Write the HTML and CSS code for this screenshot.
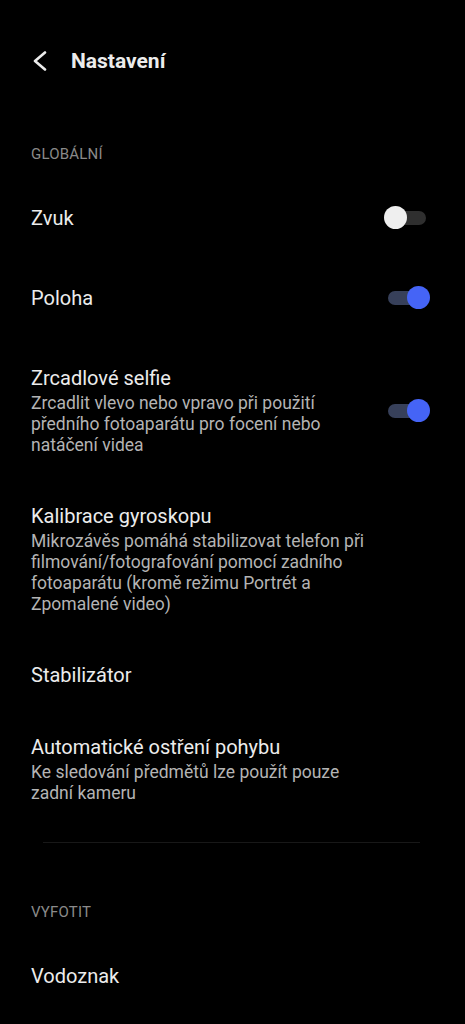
FILE: index.html
```html
<!DOCTYPE html>
<html lang="cs">

<head>
  <meta charset="UTF-8">
  <meta name="viewport" content="width=device-width, initial-scale=1.0">
  <title>Nastavení</title>
  <link rel="stylesheet" href="styles.css">
</head>

<body>
  <header class="top-bar">
    <svg class="back-icon" width="14" height="20" viewBox="0 0 14 20">
      <polyline points="12,1.5 2,10 12,18.5" fill="none" stroke="#ececec" stroke-width="2.6" stroke-linecap="round" stroke-linejoin="round" />
    </svg>
    <h1 class="page-title">Nastavení</h1>
  </header>

  <section class="settings-group">
    <div class="group-label">GLOBÁLNÍ</div>

    <div class="setting-row tall">
      <div class="setting-text">
        <div class="setting-title">Zvuk</div>
      </div>
      <div class="switch"><span class="switch-track"></span><span class="switch-knob"></span></div>
    </div>

    <div class="setting-row tall">
      <div class="setting-text">
        <div class="setting-title">Poloha</div>
      </div>
      <div class="switch on"><span class="switch-track"></span><span class="switch-knob"></span></div>
    </div>

    <div class="setting-row">
      <div class="setting-text">
        <div class="setting-title">Zrcadlové selfie</div>
        <div class="setting-desc">Zrcadlit vlevo nebo vpravo při použití předního fotoaparátu pro focení nebo natáčení videa</div>
      </div>
      <div class="switch on"><span class="switch-track"></span><span class="switch-knob"></span></div>
    </div>

    <div class="setting-row">
      <div class="setting-text">
        <div class="setting-title">Kalibrace gyroskopu</div>
        <div class="setting-desc">Mikrozávěs pomáhá stabilizovat telefon při filmování/fotografování pomocí zadního fotoaparátu (kromě režimu Portrét a Zpomalené video)</div>
      </div>
    </div>

    <div class="setting-row">
      <div class="setting-text">
        <div class="setting-title">Stabilizátor</div>
      </div>
    </div>

    <div class="setting-row">
      <div class="setting-text">
        <div class="setting-title">Automatické ostření pohybu</div>
        <div class="setting-desc">Ke sledování předmětů lze použít pouze zadní kameru</div>
      </div>
    </div>
  </section>

  <hr class="divider">

  <section class="settings-group">
    <div class="group-label second">VYFOTIT</div>

    <div class="setting-row">
      <div class="setting-text">
        <div class="setting-title">Vodoznak</div>
      </div>
    </div>
  </section>
</body>

</html>
```

FILE: styles.css
```css
body {
  margin: 0;
  background-color: #000;
  color: #e9e9e9;
  font-family: Roboto, "Noto Sans", "Liberation Sans", sans-serif;
}

.top-bar {
  display: flex;
  align-items: center;
  padding: 47px 0 0 33px;
  height: 28px;
}

.back-icon {
  display: block;
}

.page-title {
  margin: 0 0 0 24px;
  font-size: 21px;
  font-weight: 700;
  line-height: 28px;
  color: #ececec;
}

.settings-group {
  padding: 0 35px 0 31px;
}

.group-label {
  margin-top: 69px;
  font-size: 15px;
  line-height: 20px;
  color: #8a8a8a;
  letter-spacing: 0.2px;
}

.group-label.second {
  margin-top: 59px;
}

.setting-row {
  display: flex;
  align-items: center;
  justify-content: space-between;
  padding: 28px 0 20px;
}

.setting-row.tall {
  padding-bottom: 28px;
}

.group-label + .setting-row {
  margin-top: 14px;
}

.setting-text {
  max-width: 345px;
}

.setting-title {
  font-size: 20px;
  line-height: 24px;
  color: #ececec;
}

.setting-desc {
  margin-top: 3px;
  font-size: 17.5px;
  line-height: 21px;
  color: #b4b4b4;
}

.switch {
  position: relative;
  width: 46px;
  height: 24px;
  flex-shrink: 0;
}

.switch-track {
  position: absolute;
  left: 4px;
  right: 4px;
  top: 5px;
  height: 14px;
  border-radius: 7px;
  background-color: #2f2f2f;
}

.switch-knob {
  position: absolute;
  left: 0;
  top: 0;
  width: 23px;
  height: 23px;
  border-radius: 50%;
  background-color: #efefef;
}

.switch.on .switch-track {
  background-color: #37405a;
}

.switch.on .switch-knob {
  left: auto;
  right: 0;
  background-color: #4564f6;
}

.divider {
  margin: 18px 45px 0 43px;
  border: none;
  border-top: 1px solid #181818;
}
```
